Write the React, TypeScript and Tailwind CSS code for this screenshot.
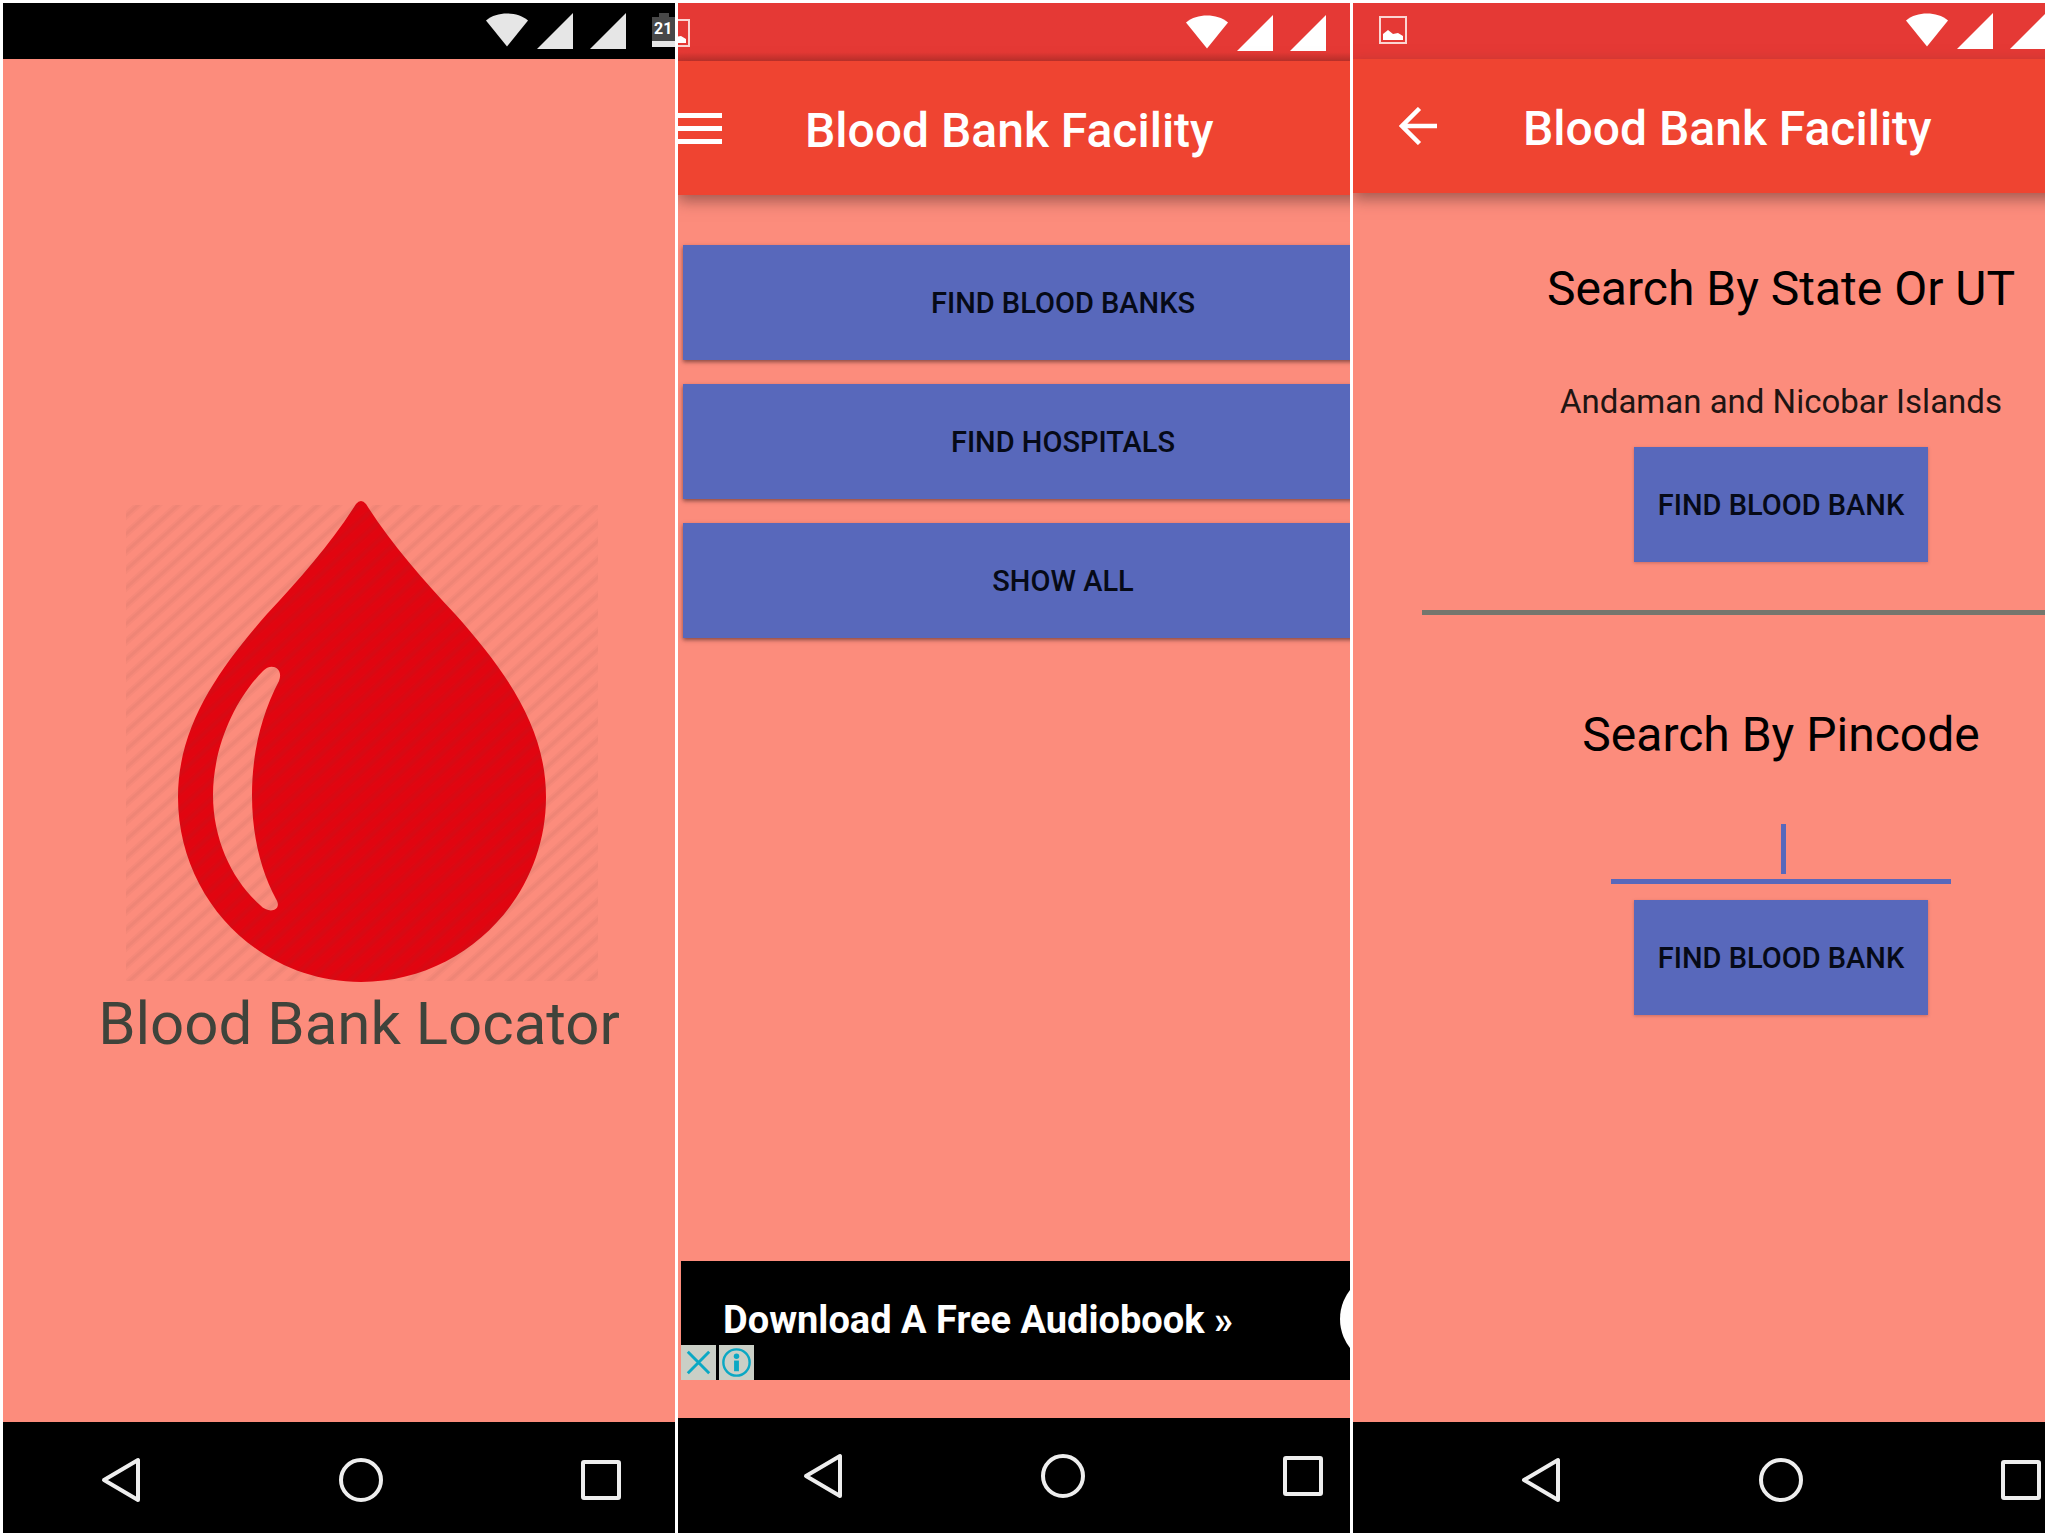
import React from "react";

const NAV = "#eeeeee";

function WifiIcon() {
  return (
    <svg width="42" height="34" viewBox="0 0 42 34" fill="currentColor" aria-hidden="true">
      <path d="M0 7.500C6 2.500 13 .5 21 .5S36 2.500 42 7.500L21 33.500Z" />
    </svg>
  );
}

function SignalIcon() {
  return (
    <svg width="36" height="36" viewBox="0 0 36 36" fill="currentColor" aria-hidden="true">
      <path d="M36 0V36H0Z" />
    </svg>
  );
}

function PictureIcon() {
  return (
    <svg className="shrink-0" width="28" height="28" viewBox="0 0 28 28" aria-hidden="true">
      <rect x="1" y="1" width="26" height="26" fill="none" stroke="#fbd5d2" strokeWidth="2" />
      <path d="M4 24V18L9 14L14 18L19 17L24 20V24Z" fill="#fff" />
    </svg>
  );
}

function Battery() {
  return (
    <div className="relative h-[34px] w-[34px] shrink-0">
      <svg width="34" height="34" viewBox="0 0 34 34" aria-hidden="true">
        <path d="M0 4H7V0H17V4H34V34H0Z" fill="#484848" />
        <rect y="28" width="34" height="6" fill="#e6e6e6" />
      </svg>
      <span className="absolute left-0.5 top-1.5 text-base font-bold leading-5 text-white">21</span>
    </div>
  );
}

function Signals() {
  return (
    <div className="flex shrink-0 items-start">
      <WifiIcon />
      <span className="ml-[9px]">
        <SignalIcon />
      </span>
      <span className="ml-[17px]">
        <SignalIcon />
      </span>
    </div>
  );
}

function NavBar({ className }: { className: string }) {
  return (
    <nav className={`flex shrink-0 items-center justify-center gap-[180px] bg-black ${className}`}>
      <button aria-label="Back" className="flex w-[60px] justify-center">
        <svg width="40" height="46" viewBox="0 0 40 46" fill="none" stroke={NAV} strokeWidth="4" strokeLinejoin="round" aria-hidden="true">
          <path d="M37 3V43L3 23Z" />
        </svg>
      </button>
      <button aria-label="Home" className="flex w-[60px] justify-center">
        <svg width="46" height="46" viewBox="0 0 46 46" fill="none" stroke={NAV} strokeWidth="4" aria-hidden="true">
          <circle cx="23" cy="23" r="20" />
        </svg>
      </button>
      <button aria-label="Recent apps" className="flex w-[60px] justify-center">
        <svg width="40" height="40" viewBox="0 0 40 40" fill="none" stroke={NAV} strokeWidth="4" strokeLinejoin="round" aria-hidden="true">
          <rect x="2" y="2" width="36" height="36" rx="1" />
        </svg>
      </button>
    </nav>
  );
}

function BloodDrop() {
  return (
    <svg width="478" height="484" viewBox="122 499 478 484" aria-hidden="true">
      <defs>
        <pattern id="hatch" width="20" height="18" patternUnits="userSpaceOnUse" patternTransform="translate(-2 0)">
          <path d="M-10 9L10 -9M-5 22.500L25 -4.500M10 27L30 9" stroke="#5a3c32" strokeOpacity=".04" strokeWidth="7" />
          <path d="M-10 9L10 -9M-5 22.500L25 -4.500M10 27L30 9" stroke="#5a3c32" strokeOpacity=".05" strokeWidth="3" />
        </pattern>
      </defs>
      <path
        fillRule="evenodd"
        fill="#e10510"
        d="M356 503Q361 497 366 503C390 541 422 578 455 613C504 668 546 725 546 796C546 898 463 981 361 981S178 898 178 796C178 725 219 668 267 613C300 578 332 541 356 503ZM263 670C236 697 213 745 213 794C213 840 233 880 260 904C269 914 283 909 276 898C262 872 252 837 252 794C252 751 262 712 279 680C284 667 271 661 263 670Z"
      />
      <rect x="126" y="504" width="472" height="476" fill="url(#hatch)" />
    </svg>
  );
}

function SplashScreen() {
  return (
    <section className="min-w-0 overflow-hidden bg-[#fc8c7c]">
      <div className="flex h-full w-[716px] flex-col">
        <div className="flex h-14 shrink-0 items-start bg-black pl-[483px] pt-2.5 text-[#e6e6e6]">
          <Signals />
          <span className="ml-[26px]">
            <Battery />
          </span>
        </div>
        <main className="flex flex-1 flex-col items-center justify-center pt-[82px]">
          <BloodDrop />
          <h1 className="pr-1 text-[60px] leading-[80px] text-[#3f433b]">Blood Bank Locator</h1>
        </main>
        <NavBar className="h-[111px] pt-1" />
      </div>
    </section>
  );
}

function MenuButton({ children }: { children: string }) {
  return (
    <button className="h-[115px] w-full bg-[#5868bb] pt-0.5 text-[29px] font-medium text-[#060a17] shadow-[0_2px_4px_rgba(60,30,30,0.6)]">
      {children}
    </button>
  );
}

function MenuScreen() {
  return (
    <section className="min-w-0 overflow-hidden bg-[#fc8c7c]">
      <div className="flex h-full w-[770px] flex-col">
        <div className="flex h-[58px] shrink-0 items-start bg-[#e53935] bg-linear-to-b from-[#e53935] from-85% to-[#c22f2a] pt-3 text-white">
          <span className="-ml-4 mr-[496px] pt-1">
            <PictureIcon />
          </span>
          <Signals />
        </div>
        <header className="flex h-[134px] shrink-0 items-center bg-[#ef4431] text-white shadow-[0_6px_14px_rgba(90,50,45,0.55)]">
          <button aria-label="Menu" className="-ml-2 flex w-[52px] flex-col gap-2">
            <span className="h-[5px] w-full bg-white" />
            <span className="h-[5px] w-full bg-white" />
            <span className="h-[5px] w-full bg-white" />
          </button>
          <h2 className="ml-[83px] pt-1.5 text-5xl font-medium">Blood Bank Facility</h2>
        </header>
        <main className="flex flex-1 flex-col gap-6 px-[5px] pt-[50px]">
          <MenuButton>FIND BLOOD BANKS</MenuButton>
          <MenuButton>FIND HOSPITALS</MenuButton>
          <MenuButton>SHOW ALL</MenuButton>
        </main>
        <aside className="relative mb-[38px] ml-[3px] flex h-[119px] shrink-0 items-center bg-black text-white">
          <a href="#audiobook" className="ml-[42px] text-[38px] font-bold">
            Download A Free Audiobook »
          </a>
          <span className="absolute left-[659px] top-[11px] size-[94px] rounded-full bg-white" />
          <div className="absolute bottom-0 left-0 flex gap-[3px] text-[#0aa8c4]">
            <button aria-label="Close ad" className="bg-[#cacfc6]">
              <svg width="35" height="35" viewBox="0 0 36 36" fill="none" stroke="currentColor" strokeWidth="3" aria-hidden="true">
                <path d="M7 7L29 29M29 7L7 29" />
              </svg>
            </button>
            <button aria-label="About this ad" className="bg-[#cacfc6]">
              <svg width="35" height="35" viewBox="0 0 36 36" aria-hidden="true">
                <circle cx="18" cy="18" r="13.500" fill="none" stroke="currentColor" strokeWidth="2.500" />
                <circle cx="18" cy="11.500" r="2.800" fill="currentColor" />
                <path d="M15.500 16H20.500V27H15.500Z" fill="currentColor" />
              </svg>
            </button>
          </div>
        </aside>
        <NavBar className="h-[115px]" />
      </div>
    </section>
  );
}

function SearchButton() {
  return (
    <button className="h-[115px] w-[294px] bg-[#5868bb] pt-0.5 text-[29px] font-medium text-[#060a17] shadow-[0_1px_3px_rgba(120,60,60,0.4)]">
      FIND BLOOD BANK
    </button>
  );
}

function SearchScreen() {
  return (
    <section className="min-w-0 overflow-hidden bg-[#fc8c7c]">
      <div className="flex h-full w-[856px] flex-col">
        <div className="flex h-14 shrink-0 items-start bg-[#e53935] pt-2.5 text-white">
          <span className="ml-[26px] mr-[499px] pt-[3px]">
            <PictureIcon />
          </span>
          <Signals />
        </div>
        <header className="flex h-[134px] shrink-0 items-center bg-[#ef4431] text-white shadow-[0_6px_14px_rgba(90,50,45,0.55)]">
          <button aria-label="Go back" className="ml-[46px]">
            <svg width="38" height="38" viewBox="0 0 38 38" fill="none" stroke="currentColor" strokeWidth="4.500" aria-hidden="true">
              <path d="M38 19H3M20.500 1.500L3 19L20.500 36.500" />
            </svg>
          </button>
          <h2 className="ml-[86px] pt-1.5 text-5xl font-medium">Blood Bank Facility</h2>
        </header>
        <main className="flex flex-1 flex-col items-center pt-16 text-black">
          <h3 className="text-5xl leading-[64px]">Search By State Or UT</h3>
          <select
            aria-label="State or UT"
            className="mt-14 h-12 w-[460px] appearance-none bg-transparent text-center text-[33px] text-[#1f1513] [text-align-last:center]"
          >
            <option>Andaman and Nicobar Islands</option>
          </select>
          <div className="mt-[22px]">
            <SearchButton />
          </div>
          <hr className="mt-12 h-[5px] w-[718px] border-0 bg-[#74766d]" />
          <h3 className="mt-[88px] text-5xl leading-[64px]">
            <label htmlFor="pincode">Search By Pincode</label>
          </h3>
          <div className="relative mt-[53px]">
            <input
              id="pincode"
              type="text"
              inputMode="numeric"
              className="block h-16 w-[340px] border-b-[5px] border-[#5868bb] bg-transparent text-center text-[33px] outline-none"
            />
            <span className="absolute left-1/2 top-1 h-[50px] w-[5px] bg-[#5868bb]" />
          </div>
          <div className="mt-4">
            <SearchButton />
          </div>
        </main>
        <NavBar className="h-[111px] pt-1" />
      </div>
    </section>
  );
}

export default function App() {
  return (
    <div className="grid h-screen grid-cols-[672fr_672fr_692fr] gap-[3px] bg-white p-[3px] font-['Roboto',sans-serif]">
      <SplashScreen />
      <MenuScreen />
      <SearchScreen />
    </div>
  );
}
